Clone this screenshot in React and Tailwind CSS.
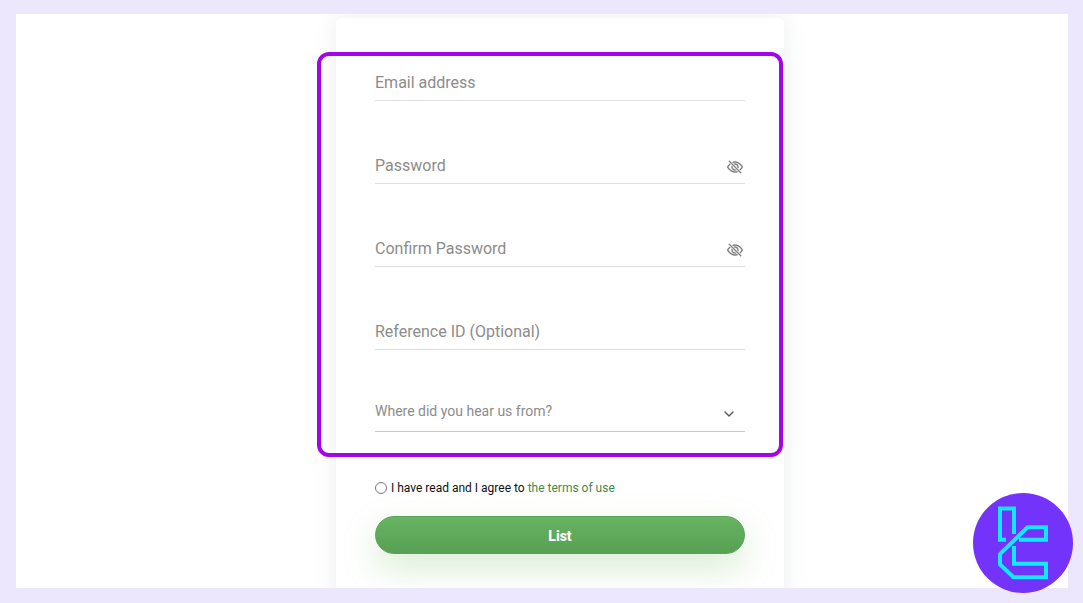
import React, { useState } from 'react';
import { BsEyeSlash } from 'react-icons/bs';
import { ChevronDown } from 'lucide-react';

const TextField = ({ id, label, type = 'text' }) => {
  const [visible, setVisible] = useState(false);
  const isPassword = type === 'password';

  return (
    <div className="pt-[46px]">
      <div className="flex items-center border-b border-[#e0e0e0]">
        {/* label and input share one grid cell, the label hides once there is a value */}
        <div className="grid min-w-0 flex-1 items-center">
          <input
            id={id}
            type={isPassword && visible ? 'text' : type}
            placeholder=" "
            className="peer col-start-1 row-start-1 h-9 w-full bg-transparent text-base text-gray-800 outline-none"
          />
          <label
            htmlFor={id}
            className="col-start-1 row-start-1 cursor-text pt-0.5 text-base text-[#8c8c8c] peer-[:not(:placeholder-shown)]:invisible"
          >
            {label}
          </label>
        </div>
        {isPassword && (
          <button type="button" aria-label="Show password" onClick={() => setVisible(!visible)} className="mr-0.5 pt-1 text-[#777777]">
            <BsEyeSlash size={16} strokeWidth={0.4} />
          </button>
        )}
      </div>
    </div>
  );
};

const Logo = () => (
  <svg viewBox="0 0 100 100" className="h-[100px] w-[100px]" aria-hidden="true">
    <circle cx="50" cy="50" r="50" fill="#7433fb" />
    <g fill="none" stroke="#12e9ff" strokeWidth="4">
      <path d="M33 46.7H27V15.5H41V41" />
      <path d="M46 46.7H73V34.2H54.5L27 61V71.5L40.5 84.3H73V70.8H41V53" />
    </g>
  </svg>
);

const App = () => {
  const [agreed, setAgreed] = useState(false);
  const [source, setSource] = useState('');

  return (
    <div className="relative flex h-screen flex-col overflow-hidden bg-[#ede7fe] pt-3.5 pr-[15px] pb-[15px] pl-4 font-[Roboto,sans-serif]">
      <main className="flex-1 overflow-hidden bg-white pt-1 pl-9">
        <form
          onSubmit={(e) => e.preventDefault()}
          className="relative mx-auto min-h-full max-w-[448px] rounded-md bg-white px-[39px] pb-[60px] shadow-[0_0_24px_rgba(40,60,70,0.09)]"
        >
          <TextField id="email" label="Email address" type="email" />
          <TextField id="password" label="Password" type="password" />
          <TextField id="confirm" label="Confirm Password" type="password" />
          <TextField id="reference" label="Reference ID (Optional)" />

          <div className="grid items-center pt-[41px]">
            <select
              id="source"
              value={source}
              onChange={(e) => setSource(e.target.value)}
              className="col-start-1 row-start-1 h-[41px] w-full appearance-none border-b border-[#c9c9c9] bg-transparent text-sm text-gray-800 outline-none"
            >
              <option value=""></option>
              <option value="search">Search engine</option>
              <option value="social">Social media</option>
              <option value="friend">A friend</option>
            </select>
            {!source && (
              <label htmlFor="source" className="pointer-events-none col-start-1 row-start-1 pb-0.5 text-sm text-[#8c8c8c]">
                Where did you hear us from?
              </label>
            )}
            <ChevronDown size={16} className="pointer-events-none col-start-1 row-start-1 mt-1 mr-2 justify-self-end text-[#555555]" />
          </div>

          <div className="mt-12 flex items-center gap-1 text-xs text-[#111111]">
            <input
              id="terms"
              type="radio"
              checked={agreed}
              onChange={() => setAgreed(true)}
              className="h-3 w-3 appearance-none rounded-full border border-[#777777] bg-white checked:bg-[#5ba75a]"
            />
            <label htmlFor="terms">
              I have read and I agree to <a href="#terms" className="text-[#45874a]">the terms of use</a>
            </label>
          </div>

          <button
            type="submit"
            className="mt-5 h-[38px] w-full rounded-full border border-[#58a557] bg-linear-to-b from-[#68b463] to-[#56a053] pt-0.5 text-sm font-extrabold text-white shadow-[0_14px_34px_rgba(104,180,80,0.25)]"
          >
            List
          </button>

          <div className="pointer-events-none absolute top-[34px] right-px -left-[19px] h-[405px] rounded-xl border-4 border-[#a305e8]" />
        </form>
      </main>
      <div className="absolute right-2.5 bottom-2.5">
        <Logo />
      </div>
    </div>
  );
};

export default App;
